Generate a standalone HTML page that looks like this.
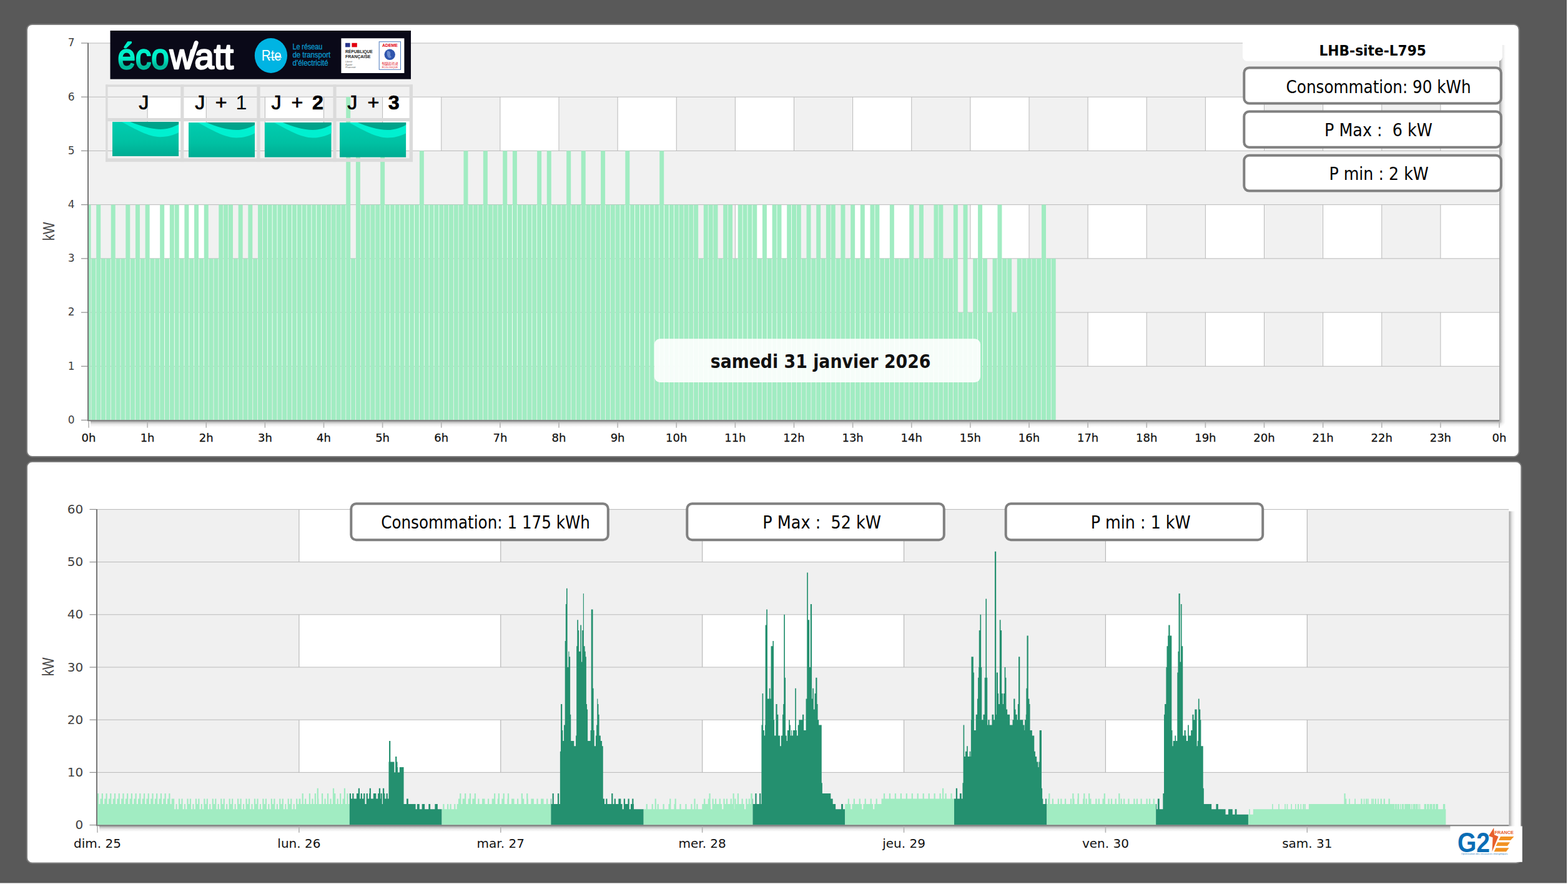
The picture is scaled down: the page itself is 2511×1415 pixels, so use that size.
<!DOCTYPE html>
<html lang="fr"><head><meta charset="utf-8"><title>Ecowatt - LHB-site-L795</title>
<style>html,body{margin:0;padding:0;background:#595959;width:2511px;height:1415px;overflow:hidden}svg{display:block}text{white-space:pre}</style></head><body>
<svg width="2511" height="1415" viewBox="0 0 2511 1415">
<defs>
<filter id="sh" x="-5%" y="-5%" width="110%" height="110%"><feGaussianBlur stdDeviation="1.9"/></filter>
<linearGradient id="gw" x1="0" y1="0" x2="0" y2="1"><stop offset="0" stop-color="#00cdb0"/><stop offset="0.6" stop-color="#00c0a2"/><stop offset="1" stop-color="#00ab92"/></linearGradient>
<linearGradient id="eco" x1="0" y1="0" x2="0" y2="1"><stop offset="0.55" stop-color="#00efc9"/><stop offset="0.75" stop-color="#00b597"/><stop offset="1" stop-color="#00d2b0"/></linearGradient>
<clipPath id="ct"><rect x="142.0" y="68.0" width="2259.0" height="604.5"/></clipPath>
<linearGradient id="shr" x1="0" y1="0" x2="1" y2="0"><stop offset="0" stop-color="#000" stop-opacity="0.4"/><stop offset="0.25" stop-color="#000" stop-opacity="0.24"/><stop offset="0.55" stop-color="#000" stop-opacity="0.08"/><stop offset="1" stop-color="#000" stop-opacity="0"/></linearGradient>
<linearGradient id="shb" x1="0" y1="0" x2="0" y2="1"><stop offset="0" stop-color="#000" stop-opacity="0.4"/><stop offset="0.25" stop-color="#000" stop-opacity="0.24"/><stop offset="0.55" stop-color="#000" stop-opacity="0.08"/><stop offset="1" stop-color="#000" stop-opacity="0"/></linearGradient>
<radialGradient id="shc" cx="0" cy="0" r="1"><stop offset="0" stop-color="#000" stop-opacity="0.4"/><stop offset="0.25" stop-color="#000" stop-opacity="0.24"/><stop offset="0.55" stop-color="#000" stop-opacity="0.08"/><stop offset="1" stop-color="#000" stop-opacity="0"/></radialGradient>
</defs>
<rect width="2511" height="1415" fill="#595959"/>
<rect x="2509" y="0" width="2" height="1415" fill="#fff"/><rect x="0" y="1413.5" width="2511" height="1.5" fill="#fff"/>
<rect x="43" y="38.9" width="2389.6" height="692" rx="8.5" fill="#fff" stroke="#7c7c7c" stroke-width="2"/>
<rect x="43" y="739.1" width="2393.3" height="642.4" rx="8.5" fill="#fff" stroke="#7c7c7c" stroke-width="2"/>
<rect x="2401.0" y="72.0" width="10" height="601.5" fill="url(#shr)"/>
<rect x="2401.0" y="673.5" width="10" height="10" fill="url(#shc)"/>
<rect x="145.0" y="673.5" width="2256.0" height="10" fill="url(#shb)"/>
<rect x="141.0" y="69.0" width="2260.0" height="603.5" fill="#fff"/>
<rect x="142.00" y="69.0" width="94.12" height="603.5" fill="#f1f1f1"/>
<rect x="330.25" y="69.0" width="94.12" height="603.5" fill="#f1f1f1"/>
<rect x="518.50" y="69.0" width="94.12" height="603.5" fill="#f1f1f1"/>
<rect x="706.75" y="69.0" width="94.12" height="603.5" fill="#f1f1f1"/>
<rect x="895.00" y="69.0" width="94.12" height="603.5" fill="#f1f1f1"/>
<rect x="1083.25" y="69.0" width="94.12" height="603.5" fill="#f1f1f1"/>
<rect x="1271.50" y="69.0" width="94.12" height="603.5" fill="#f1f1f1"/>
<rect x="1459.75" y="69.0" width="94.12" height="603.5" fill="#f1f1f1"/>
<rect x="1648.00" y="69.0" width="94.12" height="603.5" fill="#f1f1f1"/>
<rect x="1836.25" y="69.0" width="94.12" height="603.5" fill="#f1f1f1"/>
<rect x="2024.50" y="69.0" width="94.12" height="603.5" fill="#f1f1f1"/>
<rect x="2212.75" y="69.0" width="94.12" height="603.5" fill="#f1f1f1"/>
<rect x="235.62" y="69.0" width="1" height="603.5" fill="#b9b9b9"/>
<rect x="329.75" y="69.0" width="1" height="603.5" fill="#b9b9b9"/>
<rect x="423.88" y="69.0" width="1" height="603.5" fill="#b9b9b9"/>
<rect x="518.00" y="69.0" width="1" height="603.5" fill="#b9b9b9"/>
<rect x="612.12" y="69.0" width="1" height="603.5" fill="#b9b9b9"/>
<rect x="706.25" y="69.0" width="1" height="603.5" fill="#b9b9b9"/>
<rect x="800.38" y="69.0" width="1" height="603.5" fill="#b9b9b9"/>
<rect x="894.50" y="69.0" width="1" height="603.5" fill="#b9b9b9"/>
<rect x="988.62" y="69.0" width="1" height="603.5" fill="#b9b9b9"/>
<rect x="1082.75" y="69.0" width="1" height="603.5" fill="#b9b9b9"/>
<rect x="1176.88" y="69.0" width="1" height="603.5" fill="#b9b9b9"/>
<rect x="1271.00" y="69.0" width="1" height="603.5" fill="#b9b9b9"/>
<rect x="1365.12" y="69.0" width="1" height="603.5" fill="#b9b9b9"/>
<rect x="1459.25" y="69.0" width="1" height="603.5" fill="#b9b9b9"/>
<rect x="1553.38" y="69.0" width="1" height="603.5" fill="#b9b9b9"/>
<rect x="1647.50" y="69.0" width="1" height="603.5" fill="#b9b9b9"/>
<rect x="1741.62" y="69.0" width="1" height="603.5" fill="#b9b9b9"/>
<rect x="1835.75" y="69.0" width="1" height="603.5" fill="#b9b9b9"/>
<rect x="1929.88" y="69.0" width="1" height="603.5" fill="#b9b9b9"/>
<rect x="2024.00" y="69.0" width="1" height="603.5" fill="#b9b9b9"/>
<rect x="2118.12" y="69.0" width="1" height="603.5" fill="#b9b9b9"/>
<rect x="2212.25" y="69.0" width="1" height="603.5" fill="#b9b9b9"/>
<rect x="2306.38" y="69.0" width="1" height="603.5" fill="#b9b9b9"/>
<rect x="142.0" y="69.00" width="2259.0" height="86.21" fill="#f1f1f1"/>
<rect x="142.0" y="241.43" width="2259.0" height="86.21" fill="#f1f1f1"/>
<rect x="142.0" y="413.86" width="2259.0" height="86.21" fill="#f1f1f1"/>
<rect x="142.0" y="586.29" width="2259.0" height="86.21" fill="#f1f1f1"/>
<rect x="142.0" y="585.79" width="2259.0" height="1" fill="#b9b9b9"/>
<rect x="142.0" y="499.57" width="2259.0" height="1" fill="#b9b9b9"/>
<rect x="142.0" y="413.36" width="2259.0" height="1" fill="#b9b9b9"/>
<rect x="142.0" y="327.14" width="2259.0" height="1" fill="#b9b9b9"/>
<rect x="142.0" y="240.93" width="2259.0" height="1" fill="#b9b9b9"/>
<rect x="142.0" y="154.71" width="2259.0" height="1" fill="#b9b9b9"/>
<rect x="142.0" y="68.50" width="2259.0" height="1" fill="#b9b9b9"/>
<g clip-path="url(#ct)" fill="#a1ecc2">
<rect x="138.50" y="327.64" width="7" height="344.86"/>
<rect x="146.34" y="413.86" width="7" height="258.64"/>
<rect x="154.19" y="327.64" width="7" height="344.86"/>
<rect x="162.03" y="413.86" width="7" height="258.64"/>
<rect x="169.88" y="413.86" width="7" height="258.64"/>
<rect x="177.72" y="327.64" width="7" height="344.86"/>
<rect x="185.56" y="413.86" width="7" height="258.64"/>
<rect x="193.41" y="413.86" width="7" height="258.64"/>
<rect x="201.25" y="327.64" width="7" height="344.86"/>
<rect x="209.09" y="413.86" width="7" height="258.64"/>
<rect x="216.94" y="327.64" width="7" height="344.86"/>
<rect x="224.78" y="413.86" width="7" height="258.64"/>
<rect x="232.62" y="327.64" width="7" height="344.86"/>
<rect x="240.47" y="413.86" width="7" height="258.64"/>
<rect x="248.31" y="413.86" width="7" height="258.64"/>
<rect x="256.16" y="327.64" width="7" height="344.86"/>
<rect x="264.00" y="413.86" width="7" height="258.64"/>
<rect x="271.84" y="327.64" width="7" height="344.86"/>
<rect x="279.69" y="327.64" width="7" height="344.86"/>
<rect x="287.53" y="413.86" width="7" height="258.64"/>
<rect x="295.38" y="327.64" width="7" height="344.86"/>
<rect x="303.22" y="413.86" width="7" height="258.64"/>
<rect x="311.06" y="327.64" width="7" height="344.86"/>
<rect x="318.91" y="413.86" width="7" height="258.64"/>
<rect x="326.75" y="327.64" width="7" height="344.86"/>
<rect x="334.59" y="413.86" width="7" height="258.64"/>
<rect x="342.44" y="413.86" width="7" height="258.64"/>
<rect x="350.28" y="327.64" width="7" height="344.86"/>
<rect x="358.12" y="327.64" width="7" height="344.86"/>
<rect x="365.97" y="327.64" width="7" height="344.86"/>
<rect x="373.81" y="413.86" width="7" height="258.64"/>
<rect x="381.66" y="327.64" width="7" height="344.86"/>
<rect x="389.50" y="413.86" width="7" height="258.64"/>
<rect x="397.34" y="327.64" width="7" height="344.86"/>
<rect x="405.19" y="413.86" width="7" height="258.64"/>
<rect x="413.03" y="327.64" width="7" height="344.86"/>
<rect x="420.88" y="327.64" width="7" height="344.86"/>
<rect x="428.72" y="327.64" width="7" height="344.86"/>
<rect x="436.56" y="327.64" width="7" height="344.86"/>
<rect x="444.41" y="327.64" width="7" height="344.86"/>
<rect x="452.25" y="327.64" width="7" height="344.86"/>
<rect x="460.09" y="327.64" width="7" height="344.86"/>
<rect x="467.94" y="327.64" width="7" height="344.86"/>
<rect x="475.78" y="327.64" width="7" height="344.86"/>
<rect x="483.62" y="327.64" width="7" height="344.86"/>
<rect x="491.47" y="327.64" width="7" height="344.86"/>
<rect x="499.31" y="327.64" width="7" height="344.86"/>
<rect x="507.16" y="327.64" width="7" height="344.86"/>
<rect x="515.00" y="327.64" width="7" height="344.86"/>
<rect x="522.84" y="327.64" width="7" height="344.86"/>
<rect x="530.69" y="327.64" width="7" height="344.86"/>
<rect x="538.53" y="327.64" width="7" height="344.86"/>
<rect x="546.38" y="327.64" width="7" height="344.86"/>
<rect x="554.22" y="155.21" width="7" height="517.29"/>
<rect x="562.06" y="413.86" width="7" height="258.64"/>
<rect x="569.91" y="241.43" width="7" height="431.07"/>
<rect x="577.75" y="327.64" width="7" height="344.86"/>
<rect x="585.59" y="327.64" width="7" height="344.86"/>
<rect x="593.44" y="327.64" width="7" height="344.86"/>
<rect x="601.28" y="327.64" width="7" height="344.86"/>
<rect x="609.12" y="241.43" width="7" height="431.07"/>
<rect x="616.97" y="327.64" width="7" height="344.86"/>
<rect x="624.81" y="327.64" width="7" height="344.86"/>
<rect x="632.66" y="327.64" width="7" height="344.86"/>
<rect x="640.50" y="327.64" width="7" height="344.86"/>
<rect x="648.34" y="327.64" width="7" height="344.86"/>
<rect x="656.19" y="327.64" width="7" height="344.86"/>
<rect x="664.03" y="327.64" width="7" height="344.86"/>
<rect x="671.88" y="241.43" width="7" height="431.07"/>
<rect x="679.72" y="327.64" width="7" height="344.86"/>
<rect x="687.56" y="327.64" width="7" height="344.86"/>
<rect x="695.41" y="327.64" width="7" height="344.86"/>
<rect x="703.25" y="327.64" width="7" height="344.86"/>
<rect x="711.09" y="327.64" width="7" height="344.86"/>
<rect x="718.94" y="327.64" width="7" height="344.86"/>
<rect x="726.78" y="327.64" width="7" height="344.86"/>
<rect x="734.62" y="327.64" width="7" height="344.86"/>
<rect x="742.47" y="241.43" width="7" height="431.07"/>
<rect x="750.31" y="327.64" width="7" height="344.86"/>
<rect x="758.16" y="327.64" width="7" height="344.86"/>
<rect x="766.00" y="327.64" width="7" height="344.86"/>
<rect x="773.84" y="241.43" width="7" height="431.07"/>
<rect x="781.69" y="327.64" width="7" height="344.86"/>
<rect x="789.53" y="327.64" width="7" height="344.86"/>
<rect x="797.38" y="327.64" width="7" height="344.86"/>
<rect x="805.22" y="241.43" width="7" height="431.07"/>
<rect x="813.06" y="327.64" width="7" height="344.86"/>
<rect x="820.91" y="241.43" width="7" height="431.07"/>
<rect x="828.75" y="327.64" width="7" height="344.86"/>
<rect x="836.59" y="327.64" width="7" height="344.86"/>
<rect x="844.44" y="327.64" width="7" height="344.86"/>
<rect x="852.28" y="327.64" width="7" height="344.86"/>
<rect x="860.12" y="241.43" width="7" height="431.07"/>
<rect x="867.97" y="327.64" width="7" height="344.86"/>
<rect x="875.81" y="241.43" width="7" height="431.07"/>
<rect x="883.66" y="327.64" width="7" height="344.86"/>
<rect x="891.50" y="327.64" width="7" height="344.86"/>
<rect x="899.34" y="327.64" width="7" height="344.86"/>
<rect x="907.19" y="241.43" width="7" height="431.07"/>
<rect x="915.03" y="327.64" width="7" height="344.86"/>
<rect x="922.88" y="327.64" width="7" height="344.86"/>
<rect x="930.72" y="241.43" width="7" height="431.07"/>
<rect x="938.56" y="327.64" width="7" height="344.86"/>
<rect x="946.41" y="327.64" width="7" height="344.86"/>
<rect x="954.25" y="327.64" width="7" height="344.86"/>
<rect x="962.09" y="241.43" width="7" height="431.07"/>
<rect x="969.94" y="327.64" width="7" height="344.86"/>
<rect x="977.78" y="327.64" width="7" height="344.86"/>
<rect x="985.62" y="327.64" width="7" height="344.86"/>
<rect x="993.47" y="327.64" width="7" height="344.86"/>
<rect x="1001.31" y="241.43" width="7" height="431.07"/>
<rect x="1009.16" y="327.64" width="7" height="344.86"/>
<rect x="1017.00" y="327.64" width="7" height="344.86"/>
<rect x="1024.84" y="327.64" width="7" height="344.86"/>
<rect x="1032.69" y="327.64" width="7" height="344.86"/>
<rect x="1040.53" y="327.64" width="7" height="344.86"/>
<rect x="1048.38" y="327.64" width="7" height="344.86"/>
<rect x="1056.22" y="241.43" width="7" height="431.07"/>
<rect x="1064.06" y="327.64" width="7" height="344.86"/>
<rect x="1071.91" y="327.64" width="7" height="344.86"/>
<rect x="1079.75" y="327.64" width="7" height="344.86"/>
<rect x="1087.59" y="327.64" width="7" height="344.86"/>
<rect x="1095.44" y="327.64" width="7" height="344.86"/>
<rect x="1103.28" y="327.64" width="7" height="344.86"/>
<rect x="1111.12" y="327.64" width="7" height="344.86"/>
<rect x="1118.97" y="413.86" width="7" height="258.64"/>
<rect x="1126.81" y="327.64" width="7" height="344.86"/>
<rect x="1134.66" y="327.64" width="7" height="344.86"/>
<rect x="1142.50" y="327.64" width="7" height="344.86"/>
<rect x="1150.34" y="413.86" width="7" height="258.64"/>
<rect x="1158.19" y="327.64" width="7" height="344.86"/>
<rect x="1166.03" y="327.64" width="7" height="344.86"/>
<rect x="1173.88" y="413.86" width="7" height="258.64"/>
<rect x="1181.72" y="327.64" width="7" height="344.86"/>
<rect x="1189.56" y="327.64" width="7" height="344.86"/>
<rect x="1197.41" y="327.64" width="7" height="344.86"/>
<rect x="1205.25" y="327.64" width="7" height="344.86"/>
<rect x="1213.09" y="413.86" width="7" height="258.64"/>
<rect x="1220.94" y="327.64" width="7" height="344.86"/>
<rect x="1228.78" y="413.86" width="7" height="258.64"/>
<rect x="1236.62" y="327.64" width="7" height="344.86"/>
<rect x="1244.47" y="327.64" width="7" height="344.86"/>
<rect x="1252.31" y="413.86" width="7" height="258.64"/>
<rect x="1260.16" y="327.64" width="7" height="344.86"/>
<rect x="1268.00" y="327.64" width="7" height="344.86"/>
<rect x="1275.84" y="327.64" width="7" height="344.86"/>
<rect x="1283.69" y="413.86" width="7" height="258.64"/>
<rect x="1291.53" y="327.64" width="7" height="344.86"/>
<rect x="1299.38" y="413.86" width="7" height="258.64"/>
<rect x="1307.22" y="327.64" width="7" height="344.86"/>
<rect x="1315.06" y="413.86" width="7" height="258.64"/>
<rect x="1322.91" y="327.64" width="7" height="344.86"/>
<rect x="1330.75" y="327.64" width="7" height="344.86"/>
<rect x="1338.59" y="413.86" width="7" height="258.64"/>
<rect x="1346.44" y="327.64" width="7" height="344.86"/>
<rect x="1354.28" y="413.86" width="7" height="258.64"/>
<rect x="1362.12" y="327.64" width="7" height="344.86"/>
<rect x="1369.97" y="413.86" width="7" height="258.64"/>
<rect x="1377.81" y="327.64" width="7" height="344.86"/>
<rect x="1385.66" y="413.86" width="7" height="258.64"/>
<rect x="1393.50" y="327.64" width="7" height="344.86"/>
<rect x="1401.34" y="327.64" width="7" height="344.86"/>
<rect x="1409.19" y="413.86" width="7" height="258.64"/>
<rect x="1417.03" y="413.86" width="7" height="258.64"/>
<rect x="1424.88" y="327.64" width="7" height="344.86"/>
<rect x="1432.72" y="413.86" width="7" height="258.64"/>
<rect x="1440.56" y="413.86" width="7" height="258.64"/>
<rect x="1448.41" y="413.86" width="7" height="258.64"/>
<rect x="1456.25" y="327.64" width="7" height="344.86"/>
<rect x="1464.09" y="413.86" width="7" height="258.64"/>
<rect x="1471.94" y="327.64" width="7" height="344.86"/>
<rect x="1479.78" y="413.86" width="7" height="258.64"/>
<rect x="1487.62" y="413.86" width="7" height="258.64"/>
<rect x="1495.47" y="327.64" width="7" height="344.86"/>
<rect x="1503.31" y="327.64" width="7" height="344.86"/>
<rect x="1511.16" y="413.86" width="7" height="258.64"/>
<rect x="1519.00" y="413.86" width="7" height="258.64"/>
<rect x="1526.84" y="327.64" width="7" height="344.86"/>
<rect x="1534.69" y="500.07" width="7" height="172.43"/>
<rect x="1542.53" y="327.64" width="7" height="344.86"/>
<rect x="1550.38" y="500.07" width="7" height="172.43"/>
<rect x="1558.22" y="413.86" width="7" height="258.64"/>
<rect x="1566.06" y="327.64" width="7" height="344.86"/>
<rect x="1573.91" y="413.86" width="7" height="258.64"/>
<rect x="1581.75" y="500.07" width="7" height="172.43"/>
<rect x="1589.59" y="413.86" width="7" height="258.64"/>
<rect x="1597.44" y="327.64" width="7" height="344.86"/>
<rect x="1605.28" y="413.86" width="7" height="258.64"/>
<rect x="1613.12" y="413.86" width="7" height="258.64"/>
<rect x="1620.97" y="500.07" width="7" height="172.43"/>
<rect x="1628.81" y="413.86" width="7" height="258.64"/>
<rect x="1636.66" y="413.86" width="7" height="258.64"/>
<rect x="1644.50" y="413.86" width="7" height="258.64"/>
<rect x="1652.34" y="413.86" width="7" height="258.64"/>
<rect x="1660.19" y="413.86" width="7" height="258.64"/>
<rect x="1668.03" y="327.64" width="7" height="344.86"/>
<rect x="1675.88" y="413.86" width="7" height="258.64"/>
<rect x="1683.72" y="413.86" width="7" height="258.64"/>
</g>
<rect x="140.0" y="68.5" width="2" height="605.0" fill="#777"/>
<rect x="140.0" y="672.2" width="2261.0" height="2" fill="#7d7d7d"/>
<rect x="141.20" y="674.2" width="1.6" height="10.5" fill="#b4b4b4"/>
<text x="142.00" y="707" font-size="18" text-anchor="middle" fill="#111" stroke="#111" stroke-width="0.25" font-family="DejaVu Sans, Verdana, Liberation Sans, sans-serif">0h</text>
<rect x="235.32" y="674.2" width="1.6" height="10.5" fill="#b4b4b4"/>
<text x="236.12" y="707" font-size="18" text-anchor="middle" fill="#111" stroke="#111" stroke-width="0.25" font-family="DejaVu Sans, Verdana, Liberation Sans, sans-serif">1h</text>
<rect x="329.45" y="674.2" width="1.6" height="10.5" fill="#b4b4b4"/>
<text x="330.25" y="707" font-size="18" text-anchor="middle" fill="#111" stroke="#111" stroke-width="0.25" font-family="DejaVu Sans, Verdana, Liberation Sans, sans-serif">2h</text>
<rect x="423.57" y="674.2" width="1.6" height="10.5" fill="#b4b4b4"/>
<text x="424.38" y="707" font-size="18" text-anchor="middle" fill="#111" stroke="#111" stroke-width="0.25" font-family="DejaVu Sans, Verdana, Liberation Sans, sans-serif">3h</text>
<rect x="517.70" y="674.2" width="1.6" height="10.5" fill="#b4b4b4"/>
<text x="518.50" y="707" font-size="18" text-anchor="middle" fill="#111" stroke="#111" stroke-width="0.25" font-family="DejaVu Sans, Verdana, Liberation Sans, sans-serif">4h</text>
<rect x="611.83" y="674.2" width="1.6" height="10.5" fill="#b4b4b4"/>
<text x="612.62" y="707" font-size="18" text-anchor="middle" fill="#111" stroke="#111" stroke-width="0.25" font-family="DejaVu Sans, Verdana, Liberation Sans, sans-serif">5h</text>
<rect x="705.95" y="674.2" width="1.6" height="10.5" fill="#b4b4b4"/>
<text x="706.75" y="707" font-size="18" text-anchor="middle" fill="#111" stroke="#111" stroke-width="0.25" font-family="DejaVu Sans, Verdana, Liberation Sans, sans-serif">6h</text>
<rect x="800.08" y="674.2" width="1.6" height="10.5" fill="#b4b4b4"/>
<text x="800.88" y="707" font-size="18" text-anchor="middle" fill="#111" stroke="#111" stroke-width="0.25" font-family="DejaVu Sans, Verdana, Liberation Sans, sans-serif">7h</text>
<rect x="894.20" y="674.2" width="1.6" height="10.5" fill="#b4b4b4"/>
<text x="895.00" y="707" font-size="18" text-anchor="middle" fill="#111" stroke="#111" stroke-width="0.25" font-family="DejaVu Sans, Verdana, Liberation Sans, sans-serif">8h</text>
<rect x="988.33" y="674.2" width="1.6" height="10.5" fill="#b4b4b4"/>
<text x="989.12" y="707" font-size="18" text-anchor="middle" fill="#111" stroke="#111" stroke-width="0.25" font-family="DejaVu Sans, Verdana, Liberation Sans, sans-serif">9h</text>
<rect x="1082.45" y="674.2" width="1.6" height="10.5" fill="#b4b4b4"/>
<text x="1083.25" y="707" font-size="18" text-anchor="middle" fill="#111" stroke="#111" stroke-width="0.25" font-family="DejaVu Sans, Verdana, Liberation Sans, sans-serif">10h</text>
<rect x="1176.58" y="674.2" width="1.6" height="10.5" fill="#b4b4b4"/>
<text x="1177.38" y="707" font-size="18" text-anchor="middle" fill="#111" stroke="#111" stroke-width="0.25" font-family="DejaVu Sans, Verdana, Liberation Sans, sans-serif">11h</text>
<rect x="1270.70" y="674.2" width="1.6" height="10.5" fill="#b4b4b4"/>
<text x="1271.50" y="707" font-size="18" text-anchor="middle" fill="#111" stroke="#111" stroke-width="0.25" font-family="DejaVu Sans, Verdana, Liberation Sans, sans-serif">12h</text>
<rect x="1364.83" y="674.2" width="1.6" height="10.5" fill="#b4b4b4"/>
<text x="1365.62" y="707" font-size="18" text-anchor="middle" fill="#111" stroke="#111" stroke-width="0.25" font-family="DejaVu Sans, Verdana, Liberation Sans, sans-serif">13h</text>
<rect x="1458.95" y="674.2" width="1.6" height="10.5" fill="#b4b4b4"/>
<text x="1459.75" y="707" font-size="18" text-anchor="middle" fill="#111" stroke="#111" stroke-width="0.25" font-family="DejaVu Sans, Verdana, Liberation Sans, sans-serif">14h</text>
<rect x="1553.08" y="674.2" width="1.6" height="10.5" fill="#b4b4b4"/>
<text x="1553.88" y="707" font-size="18" text-anchor="middle" fill="#111" stroke="#111" stroke-width="0.25" font-family="DejaVu Sans, Verdana, Liberation Sans, sans-serif">15h</text>
<rect x="1647.20" y="674.2" width="1.6" height="10.5" fill="#b4b4b4"/>
<text x="1648.00" y="707" font-size="18" text-anchor="middle" fill="#111" stroke="#111" stroke-width="0.25" font-family="DejaVu Sans, Verdana, Liberation Sans, sans-serif">16h</text>
<rect x="1741.33" y="674.2" width="1.6" height="10.5" fill="#b4b4b4"/>
<text x="1742.12" y="707" font-size="18" text-anchor="middle" fill="#111" stroke="#111" stroke-width="0.25" font-family="DejaVu Sans, Verdana, Liberation Sans, sans-serif">17h</text>
<rect x="1835.45" y="674.2" width="1.6" height="10.5" fill="#b4b4b4"/>
<text x="1836.25" y="707" font-size="18" text-anchor="middle" fill="#111" stroke="#111" stroke-width="0.25" font-family="DejaVu Sans, Verdana, Liberation Sans, sans-serif">18h</text>
<rect x="1929.58" y="674.2" width="1.6" height="10.5" fill="#b4b4b4"/>
<text x="1930.38" y="707" font-size="18" text-anchor="middle" fill="#111" stroke="#111" stroke-width="0.25" font-family="DejaVu Sans, Verdana, Liberation Sans, sans-serif">19h</text>
<rect x="2023.70" y="674.2" width="1.6" height="10.5" fill="#b4b4b4"/>
<text x="2024.50" y="707" font-size="18" text-anchor="middle" fill="#111" stroke="#111" stroke-width="0.25" font-family="DejaVu Sans, Verdana, Liberation Sans, sans-serif">20h</text>
<rect x="2117.82" y="674.2" width="1.6" height="10.5" fill="#b4b4b4"/>
<text x="2118.62" y="707" font-size="18" text-anchor="middle" fill="#111" stroke="#111" stroke-width="0.25" font-family="DejaVu Sans, Verdana, Liberation Sans, sans-serif">21h</text>
<rect x="2211.95" y="674.2" width="1.6" height="10.5" fill="#b4b4b4"/>
<text x="2212.75" y="707" font-size="18" text-anchor="middle" fill="#111" stroke="#111" stroke-width="0.25" font-family="DejaVu Sans, Verdana, Liberation Sans, sans-serif">22h</text>
<rect x="2306.07" y="674.2" width="1.6" height="10.5" fill="#b4b4b4"/>
<text x="2306.88" y="707" font-size="18" text-anchor="middle" fill="#111" stroke="#111" stroke-width="0.25" font-family="DejaVu Sans, Verdana, Liberation Sans, sans-serif">23h</text>
<rect x="2400.20" y="674.2" width="1.6" height="10.5" fill="#b4b4b4"/>
<text x="2401.00" y="707" font-size="18" text-anchor="middle" fill="#111" stroke="#111" stroke-width="0.25" font-family="DejaVu Sans, Verdana, Liberation Sans, sans-serif">0h</text>
<rect x="130" y="671.90" width="10" height="1.2" fill="#8c8c8c"/>
<text x="119.6" y="677.80" font-size="17" text-anchor="end" fill="#404040" font-family="DejaVu Sans, Verdana, Liberation Sans, sans-serif">0</text>
<rect x="130" y="585.69" width="10" height="1.2" fill="#8c8c8c"/>
<text x="119.6" y="591.59" font-size="17" text-anchor="end" fill="#404040" font-family="DejaVu Sans, Verdana, Liberation Sans, sans-serif">1</text>
<rect x="130" y="499.47" width="10" height="1.2" fill="#8c8c8c"/>
<text x="119.6" y="505.37" font-size="17" text-anchor="end" fill="#404040" font-family="DejaVu Sans, Verdana, Liberation Sans, sans-serif">2</text>
<rect x="130" y="413.26" width="10" height="1.2" fill="#8c8c8c"/>
<text x="119.6" y="419.16" font-size="17" text-anchor="end" fill="#404040" font-family="DejaVu Sans, Verdana, Liberation Sans, sans-serif">3</text>
<rect x="130" y="327.04" width="10" height="1.2" fill="#8c8c8c"/>
<text x="119.6" y="332.94" font-size="17" text-anchor="end" fill="#404040" font-family="DejaVu Sans, Verdana, Liberation Sans, sans-serif">4</text>
<rect x="130" y="240.83" width="10" height="1.2" fill="#8c8c8c"/>
<text x="119.6" y="246.73" font-size="17" text-anchor="end" fill="#404040" font-family="DejaVu Sans, Verdana, Liberation Sans, sans-serif">5</text>
<rect x="130" y="154.61" width="10" height="1.2" fill="#8c8c8c"/>
<text x="119.6" y="160.51" font-size="17" text-anchor="end" fill="#404040" font-family="DejaVu Sans, Verdana, Liberation Sans, sans-serif">6</text>
<rect x="130" y="68.40" width="10" height="1.2" fill="#8c8c8c"/>
<text x="119.6" y="74.30" font-size="17" text-anchor="end" fill="#404040" font-family="DejaVu Sans, Verdana, Liberation Sans, sans-serif">7</text>
<text transform="translate(86.6 385.2) rotate(-90)" font-size="25.5" textLength="29.8" lengthAdjust="spacingAndGlyphs" fill="#444" font-family="Liberation Sans, Arial, sans-serif">kW</text>
<g id="ecowatt">
<rect x="176.5" y="49" width="481.5" height="77.7" fill="#0a0918"/>
<text x="188.4" y="109.7" textLength="82.2" fill="url(#eco)" stroke="url(#eco)" font-family="Liberation Sans, Arial, sans-serif" font-size="58" lengthAdjust="spacingAndGlyphs" stroke-width="2.5" stroke-linejoin="round" stroke-linecap="round">éco</text>
<text x="271.8" y="109.7" textLength="39" fill="#fff" stroke="#fff" font-family="Liberation Sans, Arial, sans-serif" font-size="58" lengthAdjust="spacingAndGlyphs" stroke-width="2.5" stroke-linejoin="round" stroke-linecap="round">w</text>
<line x1="301.5" y1="107" x2="314.2" y2="68.6" stroke="#fff" stroke-width="7" stroke-linecap="round"/>
<text x="311.5" y="109.7" textLength="62.5" fill="#fff" stroke="#fff" font-family="Liberation Sans, Arial, sans-serif" font-size="58" lengthAdjust="spacingAndGlyphs" stroke-width="2.5" stroke-linejoin="round" stroke-linecap="round">att</text>
<ellipse cx="433.9" cy="89" rx="26.1" ry="28" fill="#00b4e3"/>
<text x="418.8" y="96.6" font-size="23" textLength="32" lengthAdjust="spacingAndGlyphs" fill="#fff" font-family="Liberation Sans, Arial, sans-serif">Rte</text>
<rect x="430" y="91.2" width="21" height="1.3" fill="#fff"/>
<text x="468.4" y="78.8" font-size="13" textLength="47.9" lengthAdjust="spacingAndGlyphs" fill="#0a98cc" stroke="#0a98cc" stroke-width="0.35" font-family="Liberation Sans, Arial, sans-serif">Le réseau</text>
<text x="468.4" y="92.2" font-size="13" textLength="60.8" lengthAdjust="spacingAndGlyphs" fill="#0a98cc" stroke="#0a98cc" stroke-width="0.35" font-family="Liberation Sans, Arial, sans-serif">de transport</text>
<text x="468.4" y="105.3" font-size="13" textLength="57.1" lengthAdjust="spacingAndGlyphs" fill="#0a98cc" stroke="#0a98cc" stroke-width="0.35" font-family="Liberation Sans, Arial, sans-serif">d’électricité</text>
<rect x="546.4" y="61.3" width="101" height="55.7" fill="#fff"/>
<rect x="553" y="68.8" width="7.6" height="6.6" fill="#27348b"/><rect x="563.4" y="68.8" width="8.4" height="6.6" fill="#e1000f"/>
<text x="553" y="84.7" font-size="7.4" textLength="43.8" lengthAdjust="spacingAndGlyphs" fill="#222" font-family="Liberation Sans, Arial, sans-serif" font-weight="bold">RÉPUBLIQUE</text>
<text x="553" y="92.8" font-size="7.4" textLength="40.5" lengthAdjust="spacingAndGlyphs" fill="#222" font-family="Liberation Sans, Arial, sans-serif" font-weight="bold">FRANÇAISE</text>
<text x="553.3" y="99.6" font-size="3.8" font-style="italic" textLength="11.0" lengthAdjust="spacingAndGlyphs" fill="#555" font-family="Liberation Sans, Arial, sans-serif">Liberté</text>
<text x="553.3" y="104.5" font-size="3.8" font-style="italic" textLength="11.0" lengthAdjust="spacingAndGlyphs" fill="#555" font-family="Liberation Sans, Arial, sans-serif">Égalité</text>
<text x="553.3" y="109.3" font-size="3.8" font-style="italic" textLength="16.4" lengthAdjust="spacingAndGlyphs" fill="#555" font-family="Liberation Sans, Arial, sans-serif">Fraternité</text>
<rect x="607.2" y="66.8" width="34.3" height="44.5" fill="#fff" stroke="#4a78bd" stroke-width="1"/>
<text x="611.9" y="74.9" font-size="6.8" textLength="25" lengthAdjust="spacingAndGlyphs" fill="#e1000f" font-family="Liberation Sans, Arial, sans-serif" font-weight="bold">ADEME</text>
<circle cx="624.2" cy="87.3" r="8.7" fill="#2f55ad"/><path d="M620 82c2-1 4 0 5 2s-1 4 1 6-2 4-4 2-3-6-2-10z" fill="#7d9bd6" opacity="0.8"/>
<text x="611.7" y="101.5" font-size="2.9" textLength="25.3" lengthAdjust="spacingAndGlyphs" fill="#e1000f" font-family="Liberation Sans, Arial, sans-serif">AGENCE DE LA</text>
<text x="611.7" y="105.1" font-size="2.9" textLength="25.3" lengthAdjust="spacingAndGlyphs" fill="#e1000f" font-family="Liberation Sans, Arial, sans-serif">TRANSITION</text>
<text x="611.7" y="108.7" font-size="2.9" textLength="25.3" lengthAdjust="spacingAndGlyphs" fill="#e1000f" font-family="Liberation Sans, Arial, sans-serif">ÉCOLOGIQUE</text>
<rect x="169.1" y="135.4" width="491.9" height="3.6" fill="#dbdbdb"/>
<rect x="169.1" y="253.4" width="491.9" height="5.7" fill="#dbdbdb"/>
<rect x="169.1" y="135.4" width="3.5" height="123.7" fill="#dbdbdb"/>
<rect x="655.6" y="135.4" width="5.4" height="123.7" fill="#dbdbdb"/>
<rect x="289.2" y="135.4" width="5.2" height="123.7" fill="#dbdbdb"/>
<rect x="411.4" y="135.4" width="5.2" height="123.7" fill="#dbdbdb"/>
<rect x="533.4" y="135.4" width="5.2" height="123.7" fill="#dbdbdb"/>
<rect x="169.1" y="189.0" width="491.9" height="5.2" fill="#dbdbdb"/>
<g transform="translate(180.0 195.1) scale(106.10 54.90)"><rect width="1" height="1" fill="url(#gw)"/>
<path d="M0.14 0C0.35 0.22 0.55 0.44 0.72 0.44C0.84 0.44 0.93 0.38 1 0.31L1 0Z" fill="#00f0d0"/>
<path d="M0.27 0C0.42 0.12 0.58 0.215 0.72 0.215C0.84 0.215 0.93 0.14 1 0.07L1 0Z" fill="#00a28a"/></g>
<g transform="translate(302.0 196.1) scale(106.00 55.60)"><rect width="1" height="1" fill="url(#gw)"/>
<path d="M0.14 0C0.35 0.22 0.55 0.44 0.72 0.44C0.84 0.44 0.93 0.38 1 0.31L1 0Z" fill="#00f0d0"/>
<path d="M0.27 0C0.42 0.12 0.58 0.215 0.72 0.215C0.84 0.215 0.93 0.14 1 0.07L1 0Z" fill="#00a28a"/></g>
<g transform="translate(423.9 196.1) scale(106.60 55.60)"><rect width="1" height="1" fill="url(#gw)"/>
<path d="M0.14 0C0.35 0.22 0.55 0.44 0.72 0.44C0.84 0.44 0.93 0.38 1 0.31L1 0Z" fill="#00f0d0"/>
<path d="M0.27 0C0.42 0.12 0.58 0.215 0.72 0.215C0.84 0.215 0.93 0.14 1 0.07L1 0Z" fill="#00a28a"/></g>
<g transform="translate(544.0 196.1) scale(106.10 55.60)"><rect width="1" height="1" fill="url(#gw)"/>
<path d="M0.14 0C0.35 0.22 0.55 0.44 0.72 0.44C0.84 0.44 0.93 0.38 1 0.31L1 0Z" fill="#00f0d0"/>
<path d="M0.27 0C0.42 0.12 0.58 0.215 0.72 0.215C0.84 0.215 0.93 0.14 1 0.07L1 0Z" fill="#00a28a"/></g>
<text y="174.9" font-size="32.2" fill="#000" stroke="#000" stroke-width="0.7" font-family="Liberation Sans, Arial, sans-serif"><tspan x="222.2">J</tspan></text>
<text y="174.9" font-size="32.2" fill="#000" stroke="#000" stroke-width="0.7" font-family="Liberation Sans, Arial, sans-serif"><tspan x="312.3">J</tspan><tspan x="344.8">+</tspan><tspan x="377.5" stroke="none">1</tspan></text>
<text y="174.9" font-size="32.2" fill="#000" stroke="#000" stroke-width="0.7" font-family="Liberation Sans, Arial, sans-serif"><tspan x="434.6">J</tspan><tspan x="466.6">+</tspan><tspan x="500" font-weight="bold">2</tspan></text>
<text y="174.9" font-size="32.2" fill="#000" stroke="#000" stroke-width="0.7" font-family="Liberation Sans, Arial, sans-serif"><tspan x="556.3">J</tspan><tspan x="588.5">+</tspan><tspan x="621.8" font-weight="bold">3</tspan></text>
</g>
<rect x="1990" y="58" width="416" height="39.8" rx="7" fill="#fff"/>
<text x="2112.5" y="88.8" font-size="23.3" font-weight="bold" textLength="171.4" lengthAdjust="spacingAndGlyphs" fill="#000" font-family="DejaVu Sans, Verdana, Liberation Sans, sans-serif">LHB-site-L795</text>
<rect x="1992.3" y="108.4" width="411.5" height="57.1" rx="8" fill="#fff" stroke="#808080" stroke-width="4"/>
<text x="2059.6" y="148.6" font-size="28.3" textLength="296.0" lengthAdjust="spacingAndGlyphs" fill="#000" font-family="DejaVu Sans, Verdana, Liberation Sans, sans-serif">Consommation: 90 kWh</text>
<rect x="1992.3" y="178.5" width="411.5" height="57.2" rx="8" fill="#fff" stroke="#808080" stroke-width="4"/>
<text x="2121.0" y="218.4" font-size="28.3" textLength="172.8" lengthAdjust="spacingAndGlyphs" fill="#000" font-family="DejaVu Sans, Verdana, Liberation Sans, sans-serif">P Max :  6 kW</text>
<rect x="1992.3" y="248.7" width="411.5" height="56.9" rx="8" fill="#fff" stroke="#808080" stroke-width="4"/>
<text x="2128.4" y="288.1" font-size="28.3" textLength="159.4" lengthAdjust="spacingAndGlyphs" fill="#000" font-family="DejaVu Sans, Verdana, Liberation Sans, sans-serif">P min : 2 kW</text>
<rect x="1047.8" y="542.3" width="522.3" height="69.6" rx="9" fill="#fff" fill-opacity="0.9"/>
<text x="1137.7" y="589.1" font-size="30" font-weight="bold" textLength="352.8" lengthAdjust="spacingAndGlyphs" fill="#111" font-family="DejaVu Sans, Verdana, Liberation Sans, sans-serif">samedi 31 janvier 2026</text>
<rect x="2416.2" y="818.4" width="10" height="503.2" fill="url(#shr)"/>
<rect x="2416.2" y="1321.6" width="10" height="10" fill="url(#shc)"/>
<rect x="159.0" y="1321.6" width="2257.2" height="10" fill="url(#shb)"/>
<rect x="155.0" y="815.4" width="2261.2" height="505.2" fill="#fff"/>
<rect x="156.00" y="815.4" width="322.89" height="505.2" fill="#f0f0f0"/>
<rect x="801.77" y="815.4" width="322.89" height="505.2" fill="#f0f0f0"/>
<rect x="1447.54" y="815.4" width="322.89" height="505.2" fill="#f0f0f0"/>
<rect x="2093.31" y="815.4" width="322.89" height="505.2" fill="#f0f0f0"/>
<rect x="478.29" y="815.4" width="1.2" height="505.2" fill="#b9b9b9"/>
<rect x="801.17" y="815.4" width="1.2" height="505.2" fill="#b9b9b9"/>
<rect x="1124.06" y="815.4" width="1.2" height="505.2" fill="#b9b9b9"/>
<rect x="1446.94" y="815.4" width="1.2" height="505.2" fill="#b9b9b9"/>
<rect x="1769.83" y="815.4" width="1.2" height="505.2" fill="#b9b9b9"/>
<rect x="2092.71" y="815.4" width="1.2" height="505.2" fill="#b9b9b9"/>
<rect x="156.0" y="899.60" width="2260.2" height="84.20" fill="#f0f0f0"/>
<rect x="156.0" y="1068.00" width="2260.2" height="84.20" fill="#f0f0f0"/>
<rect x="156.0" y="1236.40" width="2260.2" height="84.20" fill="#f0f0f0"/>
<rect x="156.0" y="1235.90" width="2260.2" height="1" fill="#b9b9b9"/>
<rect x="156.0" y="1151.70" width="2260.2" height="1" fill="#b9b9b9"/>
<rect x="156.0" y="1067.50" width="2260.2" height="1" fill="#b9b9b9"/>
<rect x="156.0" y="983.30" width="2260.2" height="1" fill="#b9b9b9"/>
<rect x="156.0" y="899.10" width="2260.2" height="1" fill="#b9b9b9"/>
<rect x="156.0" y="814.90" width="2260.2" height="1" fill="#b9b9b9"/>
<path d="M156.00 1320.60V1270.1H158.24V1286.9H160.48V1278.5H162.72V1270.1H164.96V1286.9H167.20V1278.5H169.44V1270.1H171.68V1286.9H173.92V1278.5H176.16V1270.1H178.40V1286.9H180.64V1278.5H182.88V1270.1H185.12V1286.9H187.36V1278.5H189.60V1270.1H191.84V1286.9H194.08V1278.5H196.32V1270.1H198.56V1286.9H200.80V1278.5H203.04V1270.1H205.28V1286.9H207.52V1278.5H209.76V1270.1H212.00V1286.9H214.24V1278.5H216.48V1270.1H218.72V1286.9H220.96V1278.5H223.20V1270.1H225.44V1286.9H227.68V1278.5H229.92V1270.1H232.16V1286.9H234.40V1278.5H236.64V1270.1H238.88V1286.9H241.12V1278.5H243.36V1270.1H245.60V1286.9H247.84V1278.5H250.08V1270.1H252.32V1286.9H254.56V1278.5H256.80V1270.1H259.04V1286.9H261.28V1278.5H263.52V1270.1H265.76V1286.9H268.00V1278.5H270.24V1270.1H272.48V1286.9H274.72V1278.5H279.20V1295.3H281.44V1286.9H283.68V1295.3H285.92V1278.5H288.16V1286.9H290.40V1278.5H292.64V1295.3H294.88V1286.9H297.12V1295.3H299.36V1278.5H301.60V1286.9H303.84V1278.5H306.08V1295.3H308.32V1286.9H310.56V1295.3H312.80V1278.5H315.04V1286.9H317.28V1278.5H319.52V1295.3H321.76V1286.9H324.00V1295.3H326.24V1278.5H328.48V1286.9H330.72V1278.5H332.96V1295.3H335.20V1286.9H337.44V1295.3H339.68V1278.5H341.92V1286.9H344.16V1278.5H346.40V1295.3H348.64V1286.9H350.88V1295.3H353.12V1278.5H355.36V1286.9H357.60V1278.5H359.84V1295.3H362.08V1286.9H364.32V1295.3H366.56V1278.5H368.80V1286.9H371.04V1278.5H373.28V1295.3H375.52V1286.9H377.76V1295.3H380.00V1278.5H382.24V1286.9H384.48V1278.5H386.72V1295.3H388.96V1286.9H391.20V1295.3H393.44V1278.5H395.68V1286.9H397.92V1278.5H400.16V1295.3H402.40V1286.9H404.64V1295.3H406.88V1278.5H409.12V1286.9H411.36V1278.5H413.60V1295.3H415.84V1286.9H418.08V1295.3H420.32V1278.5H422.56V1286.9H424.80V1278.5H427.04V1295.3H429.28V1286.9H431.52V1295.3H433.76V1278.5H436.00V1286.9H438.24V1278.5H440.48V1295.3H442.72V1286.9H444.96V1295.3H447.20V1278.5H449.44V1286.9H451.68V1278.5H453.92V1295.3H456.16V1286.9H458.40V1295.3H460.64V1278.5H462.88V1286.9H465.12V1278.5H467.36V1295.3H469.60V1286.9H471.84V1295.3H474.08V1278.5H476.32V1286.9H478.56V1278.5H481.36V1286.9H483.60V1270.1H485.84V1286.9H488.08V1278.5H490.32V1286.9H494.80V1270.1H497.04V1286.9H499.28V1278.5H501.52V1286.9H503.76V1270.1H506.00V1286.9H507.68V1261.7H509.92V1278.5H510.48V1286.9H514.96V1270.1H517.20V1286.9H519.44V1278.5H521.68V1286.9H523.92V1270.1H526.16V1286.9H528.40V1278.5H530.64V1286.9H532.88V1261.7H535.12V1270.1H537.36V1286.9H539.60V1278.5H541.84V1286.9H544.08V1270.1H546.32V1286.9H548.56V1278.5H550.80V1261.7H553.04V1286.9H555.28V1270.1H557.52V1286.9H559.76V1320.60Z" fill="#a1ecc2"/>
<path d="M559.76 1320.60V1270.1H562.00V1278.5H564.24V1270.1H566.48V1278.5H570.96V1270.1H573.76V1261.7H576.00V1278.5H577.68V1270.1H579.92V1278.5H582.16V1270.1H584.40V1286.9H586.64V1270.1H588.88V1278.5H591.12V1270.1H591.68V1261.7H593.92V1278.5H597.84V1270.1H602.32V1278.5H605.12V1270.1H606.80V1261.7H609.04V1278.5H609.60V1270.1H611.84V1286.9H612.96V1261.7H615.20V1270.1H616.32V1278.5H618.56V1270.1H620.80V1278.5H622.48V1219.6H623.04V1185.9H625.28V1219.6H631.44V1236.4H633.12V1211.1H635.36V1219.6H636.48V1228.0H637.04V1236.4H639.84V1228.0H646.56V1286.9H651.04V1278.5H653.84V1286.9H665.60V1295.3H667.84V1286.9H671.76V1295.3H675.68V1286.9H680.16V1295.3H686.32V1286.9H689.12V1295.3H696.40V1286.9H700.88V1295.3H707.60V1320.60Z" fill="#24906f"/>
<path d="M707.60 1320.60V1295.3H709.28V1286.9H711.52V1295.3H716.00V1286.9H718.24V1295.3H720.48V1286.9H722.72V1295.3H727.20V1286.9H729.44V1295.3H731.68V1286.9H733.92V1278.5H736.16V1270.1H738.40V1286.9H740.64V1278.5H744.00V1270.1H746.24V1286.9H749.60V1278.5H751.84V1270.1H754.08V1286.9H756.32V1278.5H759.68V1270.1H761.92V1286.9H765.28V1278.5H767.52V1286.9H772.00V1278.5H776.48V1286.9H780.96V1278.5H783.20V1286.9H787.68V1278.5H791.04V1270.1H793.28V1286.9H796.64V1278.5H797.76V1270.1H800.00V1286.9H803.36V1278.5H805.60V1270.1H807.84V1286.9H812.32V1278.5H812.88V1270.1H815.12V1286.9H819.04V1278.5H823.52V1286.9H828.00V1278.5H830.24V1286.9H834.72V1270.1H836.96V1278.5H839.20V1286.9H843.12V1270.1H845.36V1278.5H845.92V1286.9H850.40V1278.5H854.88V1286.9H859.36V1278.5H861.60V1286.9H866.08V1278.5H870.56V1286.9H875.04V1278.5H877.28V1286.9H881.76V1278.5H882.32V1320.60Z" fill="#a1ecc2"/>
<path d="M882.32 1320.60V1278.5H882.88V1286.9H884.56V1270.1H886.80V1286.9H892.96V1270.1H895.20V1286.9H896.88V1202.7H898.00V1126.9H900.24V1169.0H901.36V1185.9H903.04V1160.6H904.72V1025.9H905.84V967.0H906.96V941.7H908.64V1068.0H910.32V1042.7H911.44V1051.2H913.12V1143.8H914.24V1185.9H919.28V1194.3H922.08V1177.5H923.20V1034.3H924.32V992.2H926.00V1009.1H927.12V1042.7H929.36V1000.6H931.04V1059.6H932.16V1009.1H933.84V950.1H934.96V1034.3H936.64V1042.7H937.76V1051.2H938.88V1126.9H940.00V1135.4H941.12V1185.9H945.60V1169.0H946.72V975.4H949.52V1101.7H950.64V1169.0H951.76V1194.3H954.00V1177.5H955.12V1160.6H956.24V1118.5H957.36V1126.9H958.48V1143.8H959.60V1177.5H961.84V1185.9H964.08V1194.3H965.76V1278.5H968.00V1286.9H970.24V1278.5H972.48V1286.9H979.20V1270.1H981.44V1286.9H983.68V1278.5H985.92V1286.9H990.40V1278.5H994.32V1286.9H996.56V1295.3H998.80V1278.5H1001.04V1286.9H1005.52V1278.5H1007.76V1295.3H1010.00V1286.9H1012.24V1278.5H1014.48V1286.9H1015.04V1295.3H1030.72V1320.60Z" fill="#24906f"/>
<path d="M1030.72 1320.60V1295.3H1034.64V1286.9H1036.88V1295.3H1043.60V1286.9H1045.84V1295.3H1048.64V1278.5H1050.88V1295.3H1052.56V1286.9H1054.80V1295.3H1061.52V1286.9H1063.76V1295.3H1070.48V1286.9H1072.16V1278.5H1074.40V1295.3H1079.44V1286.9H1080.56V1278.5H1082.80V1295.3H1088.40V1286.9H1090.64V1295.3H1097.36V1286.9H1099.60V1295.3H1106.32V1286.9H1108.56V1295.3H1111.36V1278.5H1113.60V1295.3H1115.28V1286.9H1117.52V1295.3H1124.24V1286.9H1127.04V1278.5H1129.28V1286.9H1133.76V1278.5H1135.44V1270.1H1137.68V1286.9H1138.24V1295.3H1140.48V1278.5H1142.72V1286.9H1144.96V1278.5H1147.20V1286.9H1151.68V1278.5H1153.92V1286.9H1156.16V1295.3H1158.40V1278.5H1160.64V1286.9H1162.88V1278.5H1165.12V1286.9H1169.60V1278.5H1171.84V1286.9H1173.52V1270.1H1175.76V1295.3H1176.32V1278.5H1178.56V1286.9H1180.80V1270.1H1183.04V1286.9H1187.52V1278.5H1189.76V1286.9H1192.00V1295.3H1194.24V1278.5H1196.48V1286.9H1198.72V1278.5H1200.96V1286.9H1202.08V1270.1H1204.88V1286.9H1205.44V1320.60Z" fill="#a1ecc2"/>
<path d="M1205.44 1320.60V1278.5H1206.00V1286.9H1209.36V1270.1H1211.60V1286.9H1216.08V1270.1H1218.32V1286.9H1219.44V1160.6H1220.56V1110.1H1222.24V1169.0H1223.92V1177.5H1225.04V1160.6H1225.60V1000.6H1227.28V975.4H1228.96V1118.5H1231.76V1101.7H1233.44V1118.5H1234.56V1034.3H1237.36V1025.9H1239.04V1152.2H1240.16V1177.5H1242.40V1126.9H1244.64V1143.8H1246.32V1177.5H1249.12V1194.3H1250.80V1177.5H1253.04V1143.8H1254.16V1126.9H1255.28V983.8H1256.96V1084.8H1258.08V1177.5H1259.76V1185.9H1260.88V1169.0H1263.12V1152.2H1264.80V1160.6H1265.92V1177.5H1267.04V1169.0H1268.16V1177.5H1269.84V1169.0H1273.20V1101.7H1274.88V1169.0H1276.00V1177.5H1277.68V1160.6H1279.36V1152.2H1284.96V1143.8H1287.20V1169.0H1290.56V1118.5H1292.24V916.4H1293.92V992.2H1296.16V1068.0H1297.84V967.0H1300.08V1118.5H1301.20V1101.7H1302.88V1135.4H1304.56V1110.1H1306.24V1084.8H1308.48V1126.9H1309.60V1152.2H1311.28V1160.6H1315.76V1253.2H1316.88V1270.1H1330.32V1278.5H1333.68V1286.9H1338.16V1295.3H1347.12V1286.9H1349.92V1295.3H1353.28V1320.60Z" fill="#24906f"/>
<path d="M1353.28 1320.60V1286.9H1357.76V1278.5H1360.00V1286.9H1362.24V1295.3H1364.48V1286.9H1366.72V1278.5H1368.96V1286.9H1375.68V1278.5H1377.92V1286.9H1380.16V1295.3H1382.40V1286.9H1384.64V1278.5H1386.88V1286.9H1393.60V1278.5H1395.84V1286.9H1398.08V1295.3H1400.32V1286.9H1402.56V1278.5H1404.80V1286.9H1411.52V1278.5H1414.88V1270.1H1417.12V1278.5H1423.84V1270.1H1426.08V1278.5H1432.80V1270.1H1435.04V1278.5H1441.76V1270.1H1444.00V1278.5H1450.72V1270.1H1452.96V1278.5H1459.68V1270.1H1461.92V1278.5H1468.64V1270.1H1470.88V1278.5H1477.60V1270.1H1479.84V1278.5H1486.56V1270.1H1488.80V1278.5H1495.52V1270.1H1497.76V1278.5H1504.48V1270.1H1506.72V1278.5H1508.96V1261.7H1511.20V1278.5H1513.44V1270.1H1515.68V1278.5H1522.40V1270.1H1524.64V1278.5H1528.00V1320.60Z" fill="#a1ecc2"/>
<path d="M1528.00 1320.60V1278.5H1530.80V1261.7H1533.04V1278.5H1536.96V1270.1H1539.76V1278.5H1541.44V1253.2H1542.56V1160.6H1544.24V1211.1H1545.92V1202.7H1548.16V1194.3H1549.84V1211.1H1552.64V1202.7H1554.32V1211.1H1554.88V1152.2H1555.44V1051.2H1558.80V1076.4H1559.92V1169.0H1562.72V1143.8H1564.96V1118.5H1566.08V1084.8H1567.20V1068.0H1567.76V1009.1H1569.44V983.8H1571.12V1068.0H1572.24V1152.2H1574.48V1143.8H1576.72V1084.8H1578.40V958.5H1580.08V1084.8H1581.20V1160.6H1582.32V1152.2H1584.56V1160.6H1588.48V1143.8H1591.28V1152.2H1592.96V882.8H1595.20V1143.8H1595.76V1076.4H1598.00V1110.1H1599.12V1126.9H1600.80V992.2H1602.48V1009.1H1604.16V1110.1H1605.84V1126.9H1606.96V1110.1H1608.64V1068.0H1610.32V1084.8H1611.44V1135.4H1613.12V1143.8H1617.04V1160.6H1621.52V1152.2H1623.20V1118.5H1625.44V1135.4H1626.56V1143.8H1628.80V1152.2H1629.92V1126.9H1631.04V1051.2H1633.28V1152.2H1638.32V1160.6H1640.56V1169.0H1641.12V1152.2H1642.80V1143.8H1643.36V1101.7H1644.48V1017.5H1646.72V1118.5H1648.40V1126.9H1649.52V1169.0H1652.88V1177.5H1656.24V1202.7H1657.92V1211.1H1660.16V1219.6H1662.40V1228.0H1663.52V1219.6H1664.64V1169.0H1668.00V1261.7H1669.12V1278.5H1670.24V1286.9H1674.16V1278.5H1675.84V1286.9H1676.40V1320.60Z" fill="#24906f"/>
<path d="M1676.40 1320.60V1286.9H1678.08V1278.5H1679.20V1270.1H1681.44V1286.9H1684.80V1278.5H1687.04V1286.9H1693.76V1278.5H1696.00V1286.9H1698.24V1278.5H1700.48V1286.9H1704.96V1278.5H1707.20V1286.9H1713.92V1278.5H1716.16V1286.9H1717.28V1270.1H1719.52V1278.5H1720.64V1286.9H1725.12V1278.5H1725.68V1270.1H1727.92V1286.9H1734.08V1278.5H1735.20V1270.1H1737.44V1286.9H1738.56V1278.5H1740.80V1286.9H1743.04V1270.1H1745.28V1278.5H1747.52V1286.9H1754.24V1278.5H1756.48V1286.9H1758.72V1278.5H1760.96V1286.9H1765.44V1278.5H1767.68V1270.1H1769.92V1286.9H1774.40V1278.5H1776.64V1286.9H1778.88V1278.5H1781.12V1286.9H1785.60V1278.5H1787.84V1286.9H1791.20V1270.1H1793.44V1286.9H1794.56V1278.5H1796.80V1286.9H1799.04V1278.5H1801.28V1286.9H1806.32V1278.5H1808.56V1286.9H1815.28V1278.5H1817.52V1286.9H1819.76V1278.5H1822.00V1286.9H1826.48V1278.5H1828.72V1286.9H1835.44V1278.5H1837.68V1286.9H1839.92V1278.5H1842.16V1286.9H1846.64V1278.5H1848.88V1286.9H1851.12V1320.60Z" fill="#a1ecc2"/>
<path d="M1851.12 1320.60V1286.9H1852.24V1295.3H1853.92V1278.5H1856.72V1295.3H1862.32V1270.1H1864.00V1143.8H1865.12V1126.9H1867.36V1068.0H1868.48V1034.3H1870.16V1017.5H1871.28V1000.6H1873.52V1017.5H1876.32V1169.0H1877.44V1194.3H1878.56V1185.9H1881.36V1177.5H1883.04V1185.9H1885.28V1076.4H1886.40V1042.7H1887.52V950.1H1889.76V1059.6H1890.88V967.0H1892.56V1034.3H1894.24V1177.5H1896.48V1169.0H1898.72V1177.5H1899.84V1185.9H1902.08V1160.6H1903.76V1177.5H1907.12V1169.0H1909.36V1143.8H1911.60V1152.2H1913.28V1135.4H1916.64V1194.3H1917.76V1185.9H1918.88V1118.5H1920.56V1135.4H1922.24V1152.2H1923.36V1194.3H1926.72V1261.7H1927.84V1286.9H1940.16V1295.3H1947.44V1286.9H1950.80V1295.3H1962.56V1303.8H1967.04V1295.3H1973.76V1303.8H1977.68V1295.3H1980.48V1303.8H1998.96V1320.60Z" fill="#24906f"/>
<path d="M1998.96 1320.60V1303.8H2000.08V1295.3H2001.76V1303.8H2006.80V1295.3H2037.04V1286.9H2038.72V1295.3H2047.12V1286.9H2048.80V1295.3H2057.20V1286.9H2058.88V1295.3H2060.56V1286.9H2062.24V1295.3H2067.28V1286.9H2068.96V1295.3H2074.00V1286.9H2075.68V1295.3H2077.92V1286.9H2080.16V1295.3H2082.40V1286.9H2084.08V1295.3H2086.32V1286.9H2088.56V1295.3H2089.12V1286.9H2090.80V1295.3H2095.84V1286.9H2152.40V1270.1H2154.64V1278.5H2156.32V1286.9H2160.24V1278.5H2161.92V1286.9H2169.20V1278.5H2170.88V1286.9H2179.28V1278.5H2181.52V1286.9H2183.76V1278.5H2185.44V1286.9H2187.12V1278.5H2189.36V1286.9H2189.92V1278.5H2191.60V1286.9H2196.08V1278.5H2197.76V1286.9H2198.32V1278.5H2200.00V1286.9H2201.68V1278.5H2203.92V1286.9H2206.16V1278.5H2207.84V1286.9H2210.64V1278.5H2212.88V1286.9H2215.68V1278.5H2217.92V1286.9H2223.52V1278.5H2225.76V1286.9H2233.04V1295.3H2233.60V1286.9H2236.96V1295.3H2237.52V1286.9H2240.88V1295.3H2242.00V1286.9H2243.68V1295.3H2244.80V1286.9H2248.16V1295.3H2249.28V1286.9H2258.80V1295.3H2259.92V1286.9H2261.60V1295.3H2262.72V1286.9H2266.64V1295.3H2267.20V1286.9H2270.56V1295.3H2271.68V1286.9H2273.36V1295.3H2274.48V1286.9H2275.04V1295.3H2280.64V1286.9H2284.00V1295.3H2285.12V1286.9H2288.48V1295.3H2289.60V1286.9H2293.52V1295.3H2294.64V1286.9H2298.00V1295.3H2299.12V1286.9H2303.04V1295.3H2310.88V1286.9H2314.24V1295.3H2315.36V1320.60Z" fill="#a1ecc2"/>
<rect x="154.0" y="814.9" width="2" height="506.7" fill="#777"/>
<rect x="154.0" y="1320.3" width="2262.2" height="2" fill="#7d7d7d"/>
<rect x="155.20" y="1322.3" width="1.6" height="10.5" fill="#b4b4b4"/>
<text x="156.00" y="1356.8" font-size="20" text-anchor="middle" fill="#111" font-family="DejaVu Sans, Verdana, Liberation Sans, sans-serif">dim. 25</text>
<rect x="478.09" y="1322.3" width="1.6" height="10.5" fill="#b4b4b4"/>
<text x="478.89" y="1356.8" font-size="20" text-anchor="middle" fill="#111" font-family="DejaVu Sans, Verdana, Liberation Sans, sans-serif">lun. 26</text>
<rect x="800.97" y="1322.3" width="1.6" height="10.5" fill="#b4b4b4"/>
<text x="801.77" y="1356.8" font-size="20" text-anchor="middle" fill="#111" font-family="DejaVu Sans, Verdana, Liberation Sans, sans-serif">mar. 27</text>
<rect x="1123.86" y="1322.3" width="1.6" height="10.5" fill="#b4b4b4"/>
<text x="1124.66" y="1356.8" font-size="20" text-anchor="middle" fill="#111" font-family="DejaVu Sans, Verdana, Liberation Sans, sans-serif">mer. 28</text>
<rect x="1446.74" y="1322.3" width="1.6" height="10.5" fill="#b4b4b4"/>
<text x="1447.54" y="1356.8" font-size="20" text-anchor="middle" fill="#111" font-family="DejaVu Sans, Verdana, Liberation Sans, sans-serif">jeu. 29</text>
<rect x="1769.63" y="1322.3" width="1.6" height="10.5" fill="#b4b4b4"/>
<text x="1770.43" y="1356.8" font-size="20" text-anchor="middle" fill="#111" font-family="DejaVu Sans, Verdana, Liberation Sans, sans-serif">ven. 30</text>
<rect x="2092.51" y="1322.3" width="1.6" height="10.5" fill="#b4b4b4"/>
<text x="2093.31" y="1356.8" font-size="20" text-anchor="middle" fill="#111" font-family="DejaVu Sans, Verdana, Liberation Sans, sans-serif">sam. 31</text>
<rect x="2415.40" y="1322.3" width="1.6" height="10.5" fill="#b4b4b4"/>
<rect x="143.5" y="1320.00" width="10.5" height="1.2" fill="#8c8c8c"/>
<text x="133.2" y="1327.10" font-size="20" text-anchor="end" fill="#404040" font-family="DejaVu Sans, Verdana, Liberation Sans, sans-serif">0</text>
<rect x="143.5" y="1235.80" width="10.5" height="1.2" fill="#8c8c8c"/>
<text x="133.2" y="1242.90" font-size="20" text-anchor="end" fill="#404040" font-family="DejaVu Sans, Verdana, Liberation Sans, sans-serif">10</text>
<rect x="143.5" y="1151.60" width="10.5" height="1.2" fill="#8c8c8c"/>
<text x="133.2" y="1158.70" font-size="20" text-anchor="end" fill="#404040" font-family="DejaVu Sans, Verdana, Liberation Sans, sans-serif">20</text>
<rect x="143.5" y="1067.40" width="10.5" height="1.2" fill="#8c8c8c"/>
<text x="133.2" y="1074.50" font-size="20" text-anchor="end" fill="#404040" font-family="DejaVu Sans, Verdana, Liberation Sans, sans-serif">30</text>
<rect x="143.5" y="983.20" width="10.5" height="1.2" fill="#8c8c8c"/>
<text x="133.2" y="990.30" font-size="20" text-anchor="end" fill="#404040" font-family="DejaVu Sans, Verdana, Liberation Sans, sans-serif">40</text>
<rect x="143.5" y="899.00" width="10.5" height="1.2" fill="#8c8c8c"/>
<text x="133.2" y="906.10" font-size="20" text-anchor="end" fill="#404040" font-family="DejaVu Sans, Verdana, Liberation Sans, sans-serif">50</text>
<rect x="143.5" y="814.80" width="10.5" height="1.2" fill="#8c8c8c"/>
<text x="133.2" y="821.90" font-size="20" text-anchor="end" fill="#404040" font-family="DejaVu Sans, Verdana, Liberation Sans, sans-serif">60</text>
<text transform="translate(86.4 1082.2) rotate(-90)" font-size="25.5" textLength="29.8" lengthAdjust="spacingAndGlyphs" fill="#444" font-family="Liberation Sans, Arial, sans-serif">kW</text>
<rect x="562.3" y="806.2" width="411.5" height="58.1" rx="8" fill="#fff" stroke="#808080" stroke-width="4"/>
<text x="610.2" y="845.6" font-size="28.3" textLength="334.8" lengthAdjust="spacingAndGlyphs" fill="#000" font-family="DejaVu Sans, Verdana, Liberation Sans, sans-serif">Consommation: 1 175 kWh</text>
<rect x="1100.3" y="806.2" width="411.5" height="58.1" rx="8" fill="#fff" stroke="#808080" stroke-width="4"/>
<text x="1221.3" y="845.6" font-size="28.3" textLength="189.7" lengthAdjust="spacingAndGlyphs" fill="#000" font-family="DejaVu Sans, Verdana, Liberation Sans, sans-serif">P Max :  52 kW</text>
<rect x="1610.7" y="806.2" width="411.5" height="58.1" rx="8" fill="#fff" stroke="#808080" stroke-width="4"/>
<text x="1746.7" y="845.6" font-size="28.3" textLength="160.0" lengthAdjust="spacingAndGlyphs" fill="#000" font-family="DejaVu Sans, Verdana, Liberation Sans, sans-serif">P min : 1 kW</text>
<rect x="2322.5" y="1322.5" width="115.3" height="57.3" fill="#fff"/>
<text x="2334" y="1363.5" font-size="44.5" textLength="52" lengthAdjust="spacingAndGlyphs" fill="#0b6db5" font-family="Liberation Sans, Arial, sans-serif" font-weight="bold">G2</text>
<polygon points="2392.2,1325 2384,1338 2390.5,1340.5 2389.5,1363.2 2399.5,1339 2393,1336.3" fill="#e8602c"/>
<text x="2393.5" y="1334.6" font-size="7.3" textLength="30.5" lengthAdjust="spacingAndGlyphs" fill="#e8602c" font-family="Liberation Sans, Arial, sans-serif" font-weight="bold">FRANCE</text>
<polygon points="2403,1339 2424.5,1339 2419,1345 2400,1345" fill="#f29222"/>
<polygon points="2398.5,1348.2 2418,1348.2 2414,1354 2395.5,1354" fill="#f29222"/>
<polygon points="2395.5,1357.2 2416.5,1357.2 2412,1363.2 2392.5,1363.2" fill="#f29222"/>
<text x="2340" y="1368.4" font-size="3.7" textLength="74.5" lengthAdjust="spacingAndGlyphs" fill="#2f7fc0" font-family="Liberation Sans, Arial, sans-serif">Optimisation des ressources énergétiques</text>
</svg></body></html>
